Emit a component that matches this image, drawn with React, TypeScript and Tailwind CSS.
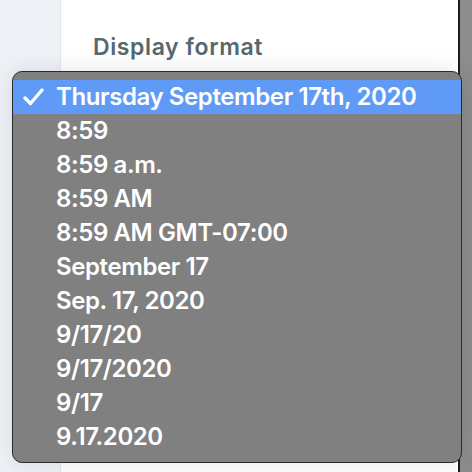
import React from "react";

const items = [
  "Thursday September 17th, 2020",
  "8:59",
  "8:59 a.m.",
  "8:59 AM",
  "8:59 AM GMT-07:00",
  "September 17",
  "Sep. 17, 2020",
  "9/17/20",
  "9/17/2020",
  "9/17",
  "9.17.2020",
];

export default function App() {
  return (
    <div
      className="relative w-[472px] h-[472px] overflow-hidden flex bg-[#8a8a8a]"
      style={{ fontFamily: "Inter, 'Open Sans', sans-serif" }}
    >
      <div className="w-[61px] h-full bg-[#eef2f6] border-r border-[#dfe5ec]" />
      <div className="w-[399px] h-full bg-white border-r-2 border-[#1c1c1c] pt-[30px] pl-[32px]">
        <div className="text-[23px] font-semibold text-[#56686f] tracking-[0.6px]">Display format</div>
      </div>
      <div className="flex-1 bg-[#8d8d8d]" />

      <div className="absolute left-[12px] top-[71px] w-[450px] h-[392px] rounded-[10px] border border-[#2a2a2a] bg-[#808080] py-[8px] shadow-[0_0_24px_rgba(0,0,0,0.1)]">
        {items.map((t, i) => (
          <div
            key={t}
            className={`h-[34px] flex items-center text-white text-[24px] font-semibold tracking-[-0.4px] ${
              i === 0 ? "bg-[#5f9bf6]" : ""
            }`}
          >
            <div className="w-[43px] shrink-0 flex items-center pl-[10px]">
              {i === 0 && (
                <svg width="21" height="18" viewBox="0 0 21 18">
                  <path d="M2 10 L7.5 15.5 L19 2" fill="none" stroke="white" strokeWidth="3.4" strokeLinecap="round" strokeLinejoin="round" />
                </svg>
              )}
            </div>
            <span>{t}</span>
          </div>
        ))}
      </div>
    </div>
  );
}
